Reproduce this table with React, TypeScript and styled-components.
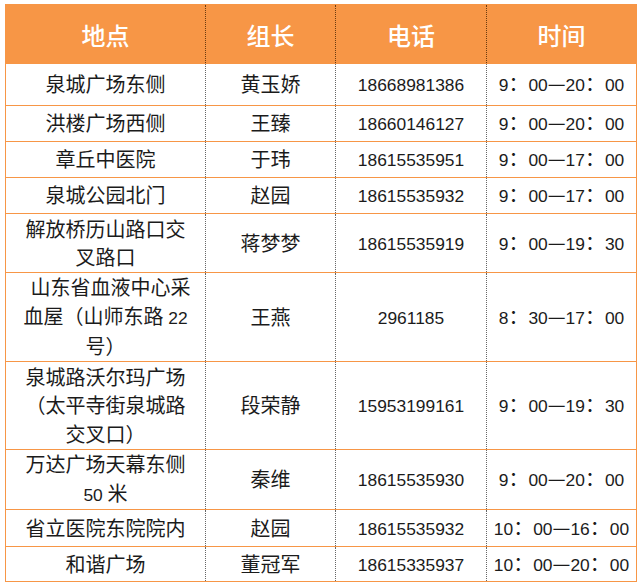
import React from "react";
import styled, { createGlobalStyle } from "styled-components";

const Global = createGlobalStyle`
  html, body { margin: 0; padding: 0; background: #ffffff; }
  body { font-family: "Noto Sans CJK SC", "Liberation Sans", sans-serif; }
`;

const ORANGE = "#F79646";

const Table = styled.table`
  border-collapse: collapse;
  table-layout: fixed;
  width: 631px;
  margin: 4px 0 0 5px;
  border: 1px solid ${ORANGE};
  font-family: "Noto Sans CJK SC", sans-serif;
`;

const Col = styled.col<{ $w: number }>`
  width: ${(p) => p.$w}px;
`;

const Row = styled.tr<{ $h: number }>`
  height: ${(p) => p.$h}px;
  border-bottom: 1px solid ${ORANGE};
`;

const HeadCell = styled.th`
  background: ${ORANGE};
  color: #ffffff;
  font-size: 24px;
  font-weight: 500;
  line-height: 28px;
  padding: 1px 0 0 0;
  text-align: center;
  vertical-align: middle;
  border-left: 1px dotted rgba(60, 30, 0, 0.75);
`;

const Cell = styled.td`
  color: #1b1b1b;
  font-size: 20px;
  line-height: 28.5px;
  padding: 0 3px;
  text-align: center;
  vertical-align: middle;
  white-space: nowrap;
  border-left: 1px dotted rgba(0, 0, 0, 0.6);
`;

const Latin = styled.span`
  font-family: "Liberation Sans", Arial, sans-serif;
  font-size: 17.4px;
`;

function Text({ value }: { value: string }) {
  const lines = value.split("\n");
  return (
    <>
      {lines.map((line, i) => (
        <React.Fragment key={i}>
          {i > 0 && <br />}
          {line.split(/([\x20-\x7E]+)/).map((part, j) =>
            /^[\x20-\x7E]+$/.test(part) ? (
              <Latin key={j}>{part}</Latin>
            ) : (
              <React.Fragment key={j}>{part}</React.Fragment>
            )
          )}
        </React.Fragment>
      ))}
    </>
  );
}

type Item = { place: string; leader: string; phone: string; time: string; h: number };

const rows: Item[] = [
  { place: "泉城广场东侧", leader: "黄玉娇", phone: "18668981386", time: "9：00—20：00", h: 42 },
  { place: "洪楼广场西侧", leader: "王臻", phone: "18660146127", time: "9：00—20：00", h: 36 },
  { place: "章丘中医院", leader: "于玮", phone: "18615535951", time: "9：00—17：00", h: 36 },
  { place: "泉城公园北门", leader: "赵园", phone: "18615535932", time: "9：00—17：00", h: 36 },
  { place: "解放桥历山路口交\n叉路口", leader: "蒋梦梦", phone: "18615535919", time: "9：00—19：30", h: 59 },
  { place: "\u2002山东省血液中心采\n血屋（山师东路 22\n号）", leader: "王燕", phone: "2961185", time: "8：30—17：00", h: 89 },
  { place: "泉城路沃尔玛广场\n（太平寺街泉城路\n交叉口）", leader: "段荣静", phone: "15953199161", time: "9：00—19：30", h: 88 },
  { place: "万达广场天幕东侧\n50 米", leader: "秦维", phone: "18615535930", time: "9：00—20：00", h: 60 },
  { place: "省立医院东院院内", leader: "赵园", phone: "18615535932", time: "10：00—16：00", h: 37 },
  { place: "和谐广场", leader: "董冠军", phone: "18615335937", time: "10：00—20：00", h: 35 },
];

export default function App() {
  return (
    <>
      <Global />
      <Table>
        <colgroup>
          <Col $w={200} />
          <Col $w={130} />
          <Col $w={151} />
          <Col $w={150} />
        </colgroup>
        <thead>
          <Row $h={59}>
            <HeadCell>地点</HeadCell>
            <HeadCell>组长</HeadCell>
            <HeadCell>电话</HeadCell>
            <HeadCell>时间</HeadCell>
          </Row>
        </thead>
        <tbody>
          {rows.map((r, i) => (
            <Row key={i} $h={r.h}>
              <Cell><Text value={r.place} /></Cell>
              <Cell><Text value={r.leader} /></Cell>
              <Cell><Text value={r.phone} /></Cell>
              <Cell><Text value={r.time} /></Cell>
            </Row>
          ))}
        </tbody>
      </Table>
    </>
  );
}
